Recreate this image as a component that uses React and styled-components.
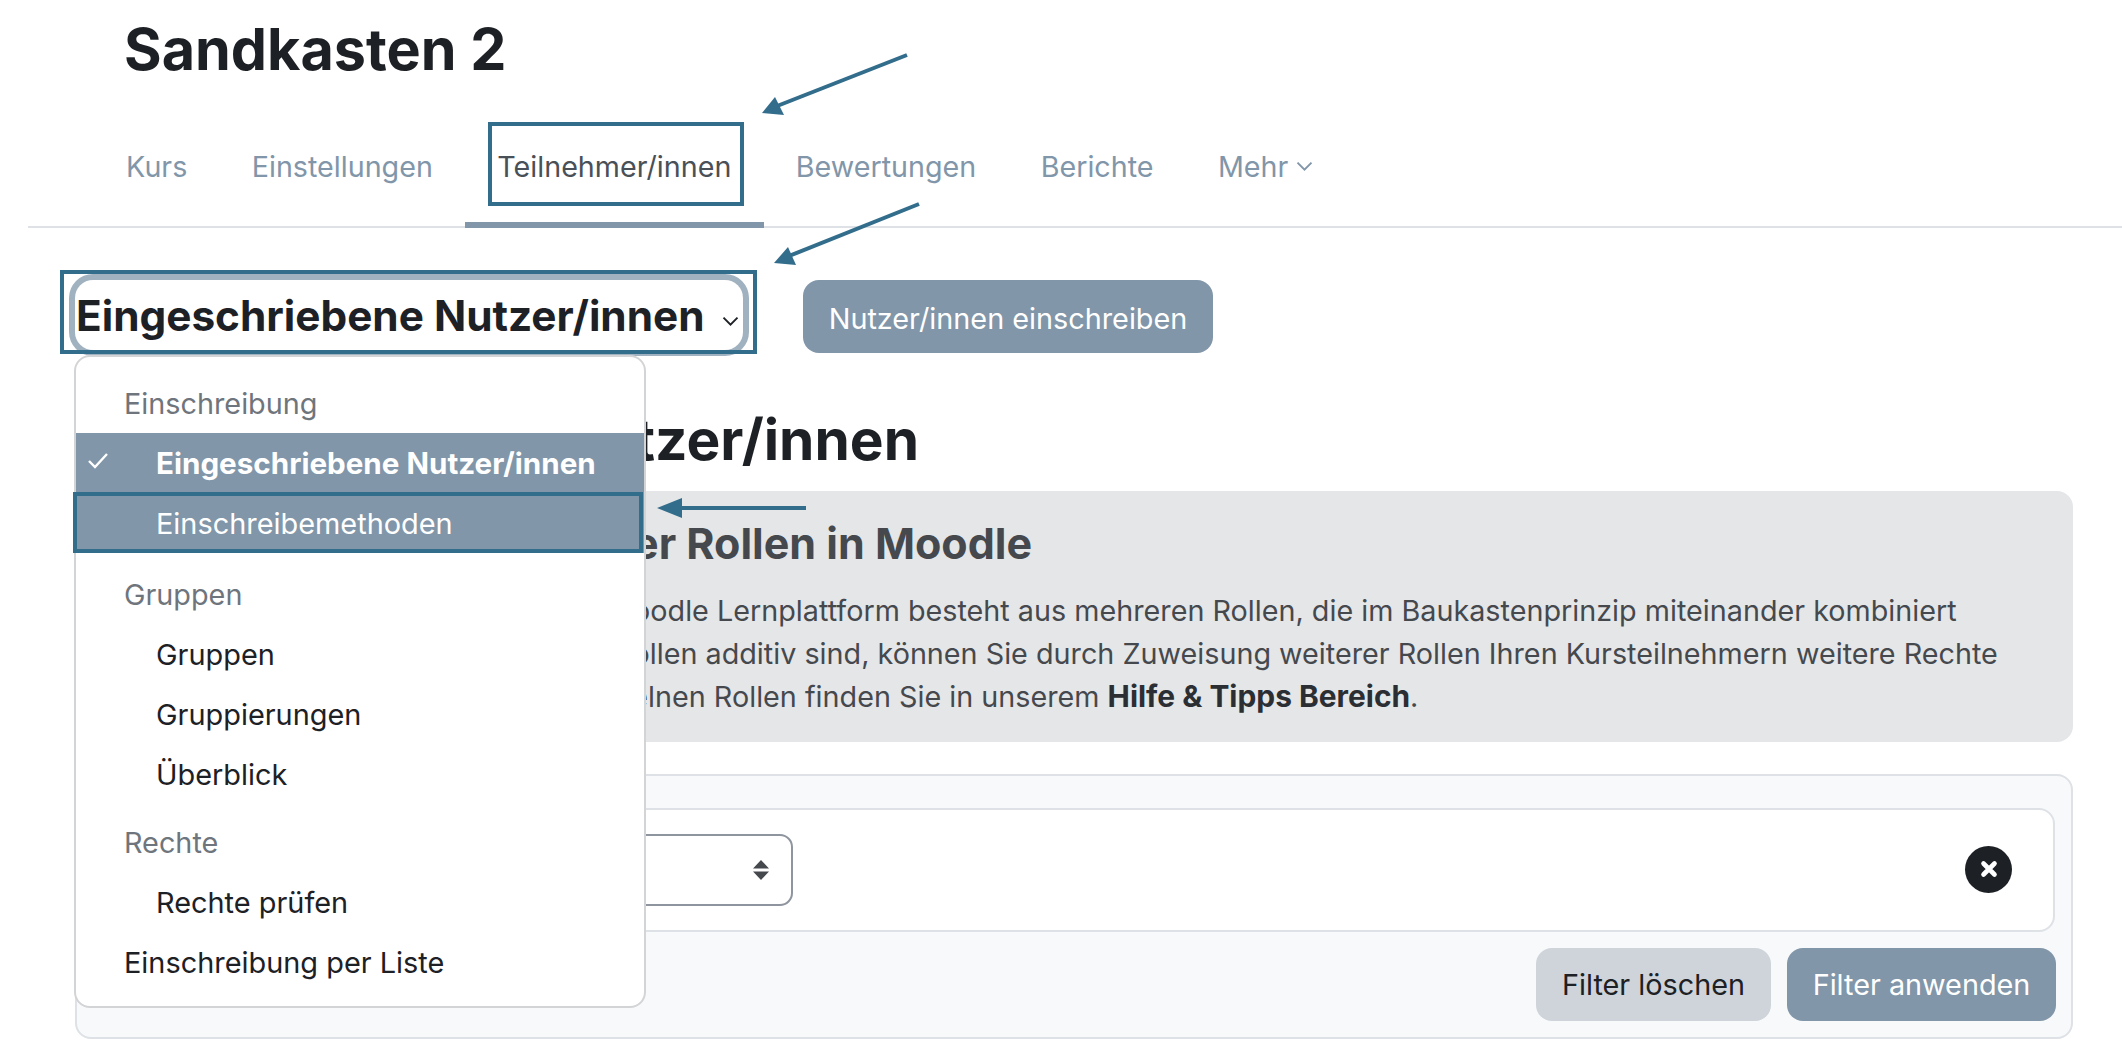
import React from "react";
import styled, { createGlobalStyle } from "styled-components";

const Global = createGlobalStyle`
  html, body { margin: 0; padding: 0; background: #fff; }
  body { font-family: Inter, "Liberation Sans", sans-serif; color: #1d2125; overflow: hidden; }
  * { box-sizing: border-box; }
`;
const Page = styled.div`position: relative; width: 2122px; height: 1042px; overflow: hidden; background: #fff;`;
const CourseTitle = styled.h1`margin: 0; height: 104px; padding: 16px 0 0 124px; font-size: 57.5px; line-height: 66px; font-weight: 700;`;
const Nav = styled.nav`display: flex; margin-left: 28px; padding-left: 66px; height: 124px; border-bottom: 2px solid #dee2e6;`;
const Tab = styled.a`
  display: flex; align-items: center; gap: 8px; height: 124px; padding: 6px 32.3px 0 32.1px;
  font-size: 28.7px; color: ${p => (p.$active ? "#495057" : "#8196a9")};
  border-bottom: 6px solid ${p => (p.$active ? "#8196a9" : "transparent")};
`;
const Toolbar = styled.div`display: flex; align-items: flex-start; gap: 60px; margin-top: 52px; padding-left: 75px;`;
const SelectButton = styled.div`
  width: 668px; height: 70px; display: flex; align-items: center; justify-content: space-between;
  padding: 0 3px 0 1px; background: #fff; border-radius: 18px; box-shadow: 0 0 0 6px #a0b1c0;
  font-size: 42.3px; font-weight: 700; color: #1d2125; white-space: nowrap;
`;
const SelectCaret = styled.span`display: flex; margin-top: 12px; padding-right: 1px;`;
const Button = styled.div`
  display: flex; align-items: center; justify-content: center;
  width: ${p => p.$w}px; height: 73px; border-radius: 16px; font-size: 28.8px; padding-top: ${p => (p.$low ? 3 : 0)}px;
  background: ${p => (p.$secondary ? "#ced4da" : "#8196a9")};
  color: ${p => (p.$secondary ? "#1d2125" : "#fff")};
`;
const Content = styled.main`padding: 0 49px 0 75px;`;
const Heading = styled.h2`margin: 51px 0 15px; height: 72px; font-size: 56.8px; line-height: 72px; font-weight: 700; white-space: nowrap;`;
const InfoBox = styled.section`
  height: 251px; padding: 27px 32px 0 219px; background: #e5e6e8; border-radius: 16px; color: #45494e;
`;
const InfoTitle = styled.h3`margin: 0 0 21px 18px; font-size: 43px; line-height: 50px; font-weight: 700; white-space: nowrap;`;
const InfoText = styled.p`margin: 0; font-size: 28.76px; line-height: 43.2px; white-space: nowrap;
  strong { font-weight: 700; font-size: 29.9px; color: #2b2f33; }`;
const FilterBox = styled.section`
  margin-top: 32px; height: 265px; padding: 32px 16px 0; background: #f8f9fa;
  border: 2px solid #dee2e6; border-radius: 16px;
`;
const FilterRow = styled.div`
  height: 124px; display: flex; align-items: center; justify-content: space-between;
  padding: 0 41px 0 0; background: #fff; border: 2px solid #dee2e6; border-radius: 16px;
`;
const FakeSelect = styled.div`
  width: 698px; height: 72px; display: flex; align-items: center; justify-content: flex-end;
  padding-right: 22px; border: 2px solid #8f959e; border-radius: 13px; background: #fff;
`;
const CloseCircle = styled.div`
  width: 47px; height: 47px; margin-bottom: 2px; border-radius: 50%; background: #1d2125; display: flex; align-items: center; justify-content: center;
`;
const FilterActions = styled.div`display: flex; justify-content: flex-end; gap: 16px; margin: 16px -1px 0 0;`;

const Menu = styled.div`
  position: absolute; left: 74px; top: 355px; width: 572px; height: 653px; padding: 16px 0 0;
  background: #fff; border: 2px solid #d3d4d6; border-radius: 16px; z-index: 2;
`;
const MenuHeader = styled.div`height: 60px; display: flex; align-items: center; padding-left: 48px; font-size: 28.8px; color: #6f757c; margin-top: ${p => p.$gap || 0}px;`;
const MenuItem = styled.div`
  position: relative; height: 60px; display: flex; align-items: center; padding-left: ${p => (p.$flush ? 48 : 80)}px;
  font-size: ${p => (p.$bold ? 29.6 : 28.9)}px; font-weight: ${p => (p.$bold ? 700 : 400)};
  background: ${p => (p.$on ? "#8196a9" : "transparent")}; color: ${p => (p.$on ? "#fff" : "#1d2125")};
`;
const Check = styled.svg`position: absolute; left: 11px; top: 19px;`;
const Annot = styled.div`
  position: absolute; left: ${p => p.$x}px; top: ${p => p.$y}px; width: ${p => p.$w}px; height: ${p => p.$h}px;
  border: 4px solid #336d8c; z-index: 3; pointer-events: none;
`;
const Arrows = styled.svg`position: absolute; left: 0; top: 0; z-index: 4; pointer-events: none;`;

const Chevron = ({ w = 17 }) => (
  <svg width={w} height={w * 0.6} viewBox="0 0 17 10" fill="none" stroke="currentColor" strokeWidth="1.9"><path d="M1.5 1.5 8.5 8.5 15.5 1.5" /></svg>
);

export default function App() {
  return (
    <Page>
      <Global />
      <CourseTitle>Sandkasten 2</CourseTitle>
      <Nav>
        <Tab>Kurs</Tab>
        <Tab>Einstellungen</Tab>
        <Tab $active>Teilnehmer/innen</Tab>
        <Tab>Bewertungen</Tab>
        <Tab>Berichte</Tab>
        <Tab>Mehr <Chevron /></Tab>
      </Nav>
      <Toolbar>
        <SelectButton>Eingeschriebene Nutzer/innen <SelectCaret><Chevron /></SelectCaret></SelectButton>
        <Button $low $w={410}>Nutzer/innen einschreiben</Button>
      </Toolbar>
      <Content>
        <Heading>Eingeschriebene Nutzer/innen</Heading>
        <InfoBox>
          <InfoTitle>Die Übersicht der Rollen in Moodle</InfoTitle>
          <InfoText>
            Das Rollenkonzept der Moodle Lernplattform besteht aus mehreren Rollen, die im Baukastenprinzip miteinander kombiniert<br />
            werden können. Da die Rollen additiv sind, können Sie durch Zuweisung weiterer Rollen Ihren Kursteilnehmern weitere Rechte<br />
            geben. Mehr zu den einzelnen Rollen finden Sie in unserem <strong>Hilfe &amp; Tipps Bereich</strong>.
          </InfoText>
        </InfoBox>
        <FilterBox>
          <FilterRow>
            <FakeSelect>
              <svg width="16" height="20" viewBox="0 0 16 20" fill="#45494e"><path d="M8 0 16 8.5H0Z M0 11.5H16L8 20Z" /></svg>
            </FakeSelect>
            <CloseCircle>
              <svg width="20" height="20" viewBox="0 0 20 20" stroke="#fff" strokeWidth="4.6" strokeLinecap="round"><path d="M4.5 4.5 15.5 15.5M15.5 4.5 4.5 15.5" /></svg>
            </CloseCircle>
          </FilterRow>
          <FilterActions>
            <Button $secondary $w={235}>Filter löschen</Button>
            <Button $w={269}>Filter anwenden</Button>
          </FilterActions>
        </FilterBox>
      </Content>
      <Menu>
        <MenuHeader>Einschreibung</MenuHeader>
        <MenuItem $on $bold>
          <Check width="22" height="17" viewBox="0 0 22 17" fill="none" stroke="#fff" strokeWidth="2.4"><path d="M2 9 8 15 20 2" /></Check>
          Eingeschriebene Nutzer/innen
        </MenuItem>
        <MenuItem $on>Einschreibemethoden</MenuItem>
        <MenuHeader $gap={11}>Gruppen</MenuHeader>
        <MenuItem>Gruppen</MenuItem>
        <MenuItem>Gruppierungen</MenuItem>
        <MenuItem>Überblick</MenuItem>
        <MenuHeader $gap={8}>Rechte</MenuHeader>
        <MenuItem>Rechte prüfen</MenuItem>
        <MenuItem $flush>Einschreibung per Liste</MenuItem>
      </Menu>
      <Annot $x={488} $y={122} $w={256} $h={84} />
      <Annot $x={60} $y={270} $w={697} $h={84} />
      <Annot $x={73} $y={492} $w={570} $h={61} />
      <Arrows width="2122" height="1042" viewBox="0 0 2122 1042" fill="#336d8c" stroke="#336d8c">
        <path d="M907 55 772 108" strokeWidth="4" fill="none" />
        <path d="M762 113 775 97 784 115Z" stroke="none" />
        <path d="M919 204 784 258" strokeWidth="4" fill="none" />
        <path d="M774 263 788 247 796 265Z" stroke="none" />
        <path d="M806 508 672 508" strokeWidth="4" fill="none" />
        <path d="M657 508 682 498 682 518Z" stroke="none" />
      </Arrows>
    </Page>
  );
}
